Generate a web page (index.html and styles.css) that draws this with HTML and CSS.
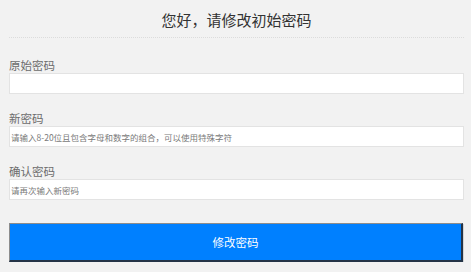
FILE: index.html
```html
<!DOCTYPE html>
<html lang="zh-CN">
<head>
<meta charset="utf-8">
<title>修改初始密码</title>
<link rel="stylesheet" href="styles.css">
</head>
<body>
<div class="page">
  <div class="header">
    <h1 class="title">您好，请修改初始密码</h1>
  </div>
  <form class="form">
    <div class="field field-first">
      <label class="label">原始密码</label>
      <input class="input" type="password">
    </div>
    <div class="field">
      <label class="label">新密码</label>
      <input class="input" type="password" placeholder="请输入8-20位且包含字母和数字的组合，可以使用特殊字符">
    </div>
    <div class="field">
      <label class="label">确认密码</label>
      <input class="input" type="password" placeholder="请再次输入新密码">
    </div>
    <button class="submit" type="button">修改密码</button>
  </form>
</div>
</body>
</html>
```

FILE: styles.css
```css
html, body {
  margin: 0;
  padding: 0;
  background: #f2f2f2;
  font-family: "Noto Sans CJK SC", "Noto Sans", sans-serif;
}
.page {
  padding: 0 7px 0 9px;
}
.header {
  padding-top: 10px;
  padding-bottom: 7px;
  border-bottom: 1px dotted #dcdcdc;
}
.title {
  margin: 0;
  font-size: 15px;
  line-height: 20px;
  font-weight: normal;
  color: #333;
  text-align: center;
}
.form {
  display: flex;
  flex-direction: column;
}
.field {
  display: flex;
  flex-direction: column;
  margin-top: 18px;
}
.field-first {
  margin-top: 21px;
}
.label {
  font-size: 11.5px;
  line-height: 12px;
  margin-bottom: 2px;
  color: #6c6c6c;
}
.input {
  box-sizing: border-box;
  height: 21px;
  margin: 0;
  padding: 0 1px;
  border: 1px solid #e3e3e3;
  background: #fff;
  font-family: "Noto Sans CJK SC", sans-serif;
  font-size: 8.5px;
  color: #333;
  outline: none;
}
.input::placeholder {
  color: #7a7a7a;
}
.submit {
  box-sizing: border-box;
  margin: 23px 1px 0 0;
  height: 39px;
  border-style: solid;
  border-width: 1px 2px 2px 1px;
  border-color: #8c8c8c #243447 #243447 #8c8c8c;
  box-shadow: 1px 1px 0 #d4d4d4;
  background: #0080ff;
  color: #fff;
  font-family: "Noto Sans CJK SC", sans-serif;
  font-size: 11.5px;
  padding: 0;
}
```
